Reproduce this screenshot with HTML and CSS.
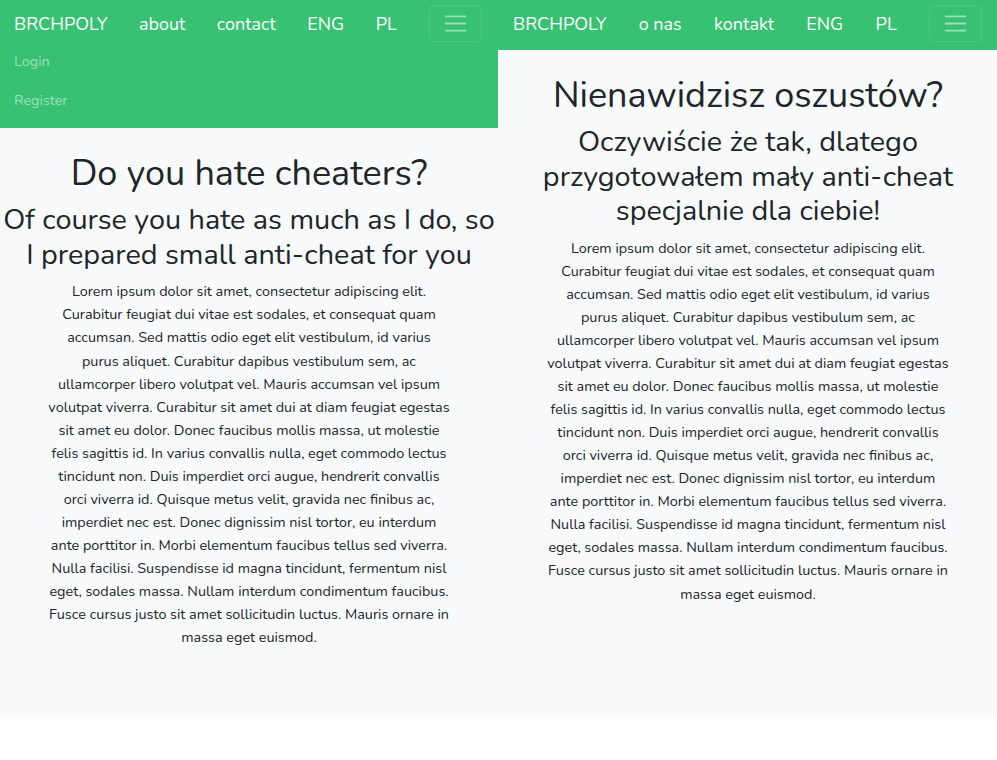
FILE: index.html
```html
<!DOCTYPE html>
<html lang="en">
<head>
<meta charset="utf-8">
<title>BRCHPOLY</title>
<link rel="stylesheet" href="styles.css">
</head>
<body>
<div class="frames">
  <section class="frame frame-left">
    <nav class="navbar">
      <div class="nav-row">
        <a class="brand" href="#">BRCHPOLY</a>
        <a class="nav-link" href="#">about</a>
        <a class="nav-link" href="#">contact</a>
        <a class="nav-link" href="#">ENG</a>
        <a class="nav-link" href="#">PL</a>
        <button class="toggler" type="button" aria-label="Toggle navigation">
          <svg class="toggler-icon" viewBox="0 0 30 30" width="27" height="27"><path d="M4 7h22M4 15h22M4 23h22" stroke="rgba(255,255,255,0.5)" stroke-width="2" stroke-linecap="round" fill="none"/></svg>
        </button>
      </div>
      <div class="collapse">
        <a class="sub-link" href="#">Login</a>
        <a class="sub-link" href="#">Register</a>
      </div>
    </nav>
    <main class="content">
      <h1 class="title">Do you hate cheaters?</h1>
      <h2 class="subtitle">Of course you hate as much as I do, so I prepared small anti-cheat for you</h2>
      <p class="lead-text">Lorem ipsum dolor sit amet, consectetur adipiscing elit. Curabitur feugiat dui vitae est sodales, et consequat quam accumsan. Sed mattis odio eget elit vestibulum, id varius purus aliquet. Curabitur dapibus vestibulum sem, ac ullamcorper libero volutpat vel. Mauris accumsan vel ipsum volutpat viverra. Curabitur sit amet dui at diam feugiat egestas sit amet eu dolor. Donec faucibus mollis massa, ut molestie felis sagittis id. In varius convallis nulla, eget commodo lectus tincidunt non. Duis imperdiet orci augue, hendrerit convallis orci viverra id. Quisque metus velit, gravida nec finibus ac, imperdiet nec est. Donec dignissim nisl tortor, eu interdum ante porttitor in. Morbi elementum faucibus tellus sed viverra. Nulla facilisi. Suspendisse id magna tincidunt, fermentum nisl eget, sodales massa. Nullam interdum condimentum faucibus. Fusce cursus justo sit amet sollicitudin luctus. Mauris ornare in massa eget euismod.</p>
    </main>
  </section>
  <section class="frame frame-right">
    <nav class="navbar">
      <div class="nav-row">
        <a class="brand" href="#">BRCHPOLY</a>
        <a class="nav-link" href="#">o nas</a>
        <a class="nav-link" href="#">kontakt</a>
        <a class="nav-link" href="#">ENG</a>
        <a class="nav-link" href="#">PL</a>
        <button class="toggler" type="button" aria-label="Przełącz nawigację">
          <svg class="toggler-icon" viewBox="0 0 30 30" width="27" height="27"><path d="M4 7h22M4 15h22M4 23h22" stroke="rgba(255,255,255,0.5)" stroke-width="2" stroke-linecap="round" fill="none"/></svg>
        </button>
      </div>
    </nav>
    <main class="content">
      <h1 class="title">Nienawidzisz oszustów?</h1>
      <h2 class="subtitle">Oczywiście że tak, dlatego przygotowałem mały anti-cheat specjalnie dla ciebie!</h2>
      <p class="lead-text">Lorem ipsum dolor sit amet, consectetur adipiscing elit. Curabitur feugiat dui vitae est sodales, et consequat quam accumsan. Sed mattis odio eget elit vestibulum, id varius purus aliquet. Curabitur dapibus vestibulum sem, ac ullamcorper libero volutpat vel. Mauris accumsan vel ipsum volutpat viverra. Curabitur sit amet dui at diam feugiat egestas sit amet eu dolor. Donec faucibus mollis massa, ut molestie felis sagittis id. In varius convallis nulla, eget commodo lectus tincidunt non. Duis imperdiet orci augue, hendrerit convallis orci viverra id. Quisque metus velit, gravida nec finibus ac, imperdiet nec est. Donec dignissim nisl tortor, eu interdum ante porttitor in. Morbi elementum faucibus tellus sed viverra. Nulla facilisi. Suspendisse id magna tincidunt, fermentum nisl eget, sodales massa. Nullam interdum condimentum faucibus. Fusce cursus justo sit amet sollicitudin luctus. Mauris ornare in massa eget euismod.</p>
    </main>
  </section>
</div>
</body>
</html>
```
FILE: styles.css
```css
* { box-sizing: border-box; }

html, body {
  margin: 0;
  padding: 0;
  background: #ffffff;
}

body {
  font-family: Nunito, "Noto Sans", sans-serif;
  font-size: 14.4px;
  line-height: 1.6;
  color: #212529;
}

.frames {
  display: flex;
  height: 717px;
  background: #f8fafc;
}

.frame {
  display: flex;
  flex-direction: column;
}

.frame-left { width: 498px; flex-shrink: 0; }
.frame-right { flex: 1; }

.navbar {
  background: #38c172;
  padding: 5px 16px 8px 14px;
}

.frame-right .navbar { padding-left: 15px; }

.nav-row {
  display: flex;
  align-items: center;
  gap: 31.5px;
  height: 37px;
}

.frame-right .nav-row { gap: 32.3px; }

.brand,
.nav-link {
  flex-shrink: 0;
  white-space: nowrap;
  color: #ffffff;
  text-decoration: none;
  font-size: 18px;
  line-height: 1;
}

.toggler {
  flex-shrink: 0;
  margin-left: auto;
  display: flex;
  align-items: center;
  justify-content: center;
  width: 53px;
  height: 37px;
  padding: 0;
  background: transparent;
  border: 1px solid rgba(255, 255, 255, 0.1);
  border-radius: 4px;
}

.toggler-icon { display: block; }

.collapse {
  display: flex;
  flex-direction: column;
}

.sub-link {
  display: block;
  padding: 8px 0;
  color: rgba(255, 255, 255, 0.5);
  text-decoration: none;
}

.content {
  padding: 24px 0;
  text-align: center;
}

.title {
  margin: 0 0 8px;
  font-size: 36px;
  font-weight: 400;
  line-height: 1.2;
}

.subtitle {
  margin: 0 0 8px;
  font-size: 28.8px;
  font-weight: 400;
  line-height: 1.2;
}

.lead-text {
  margin: 0 auto 16px;
  max-width: 403px;
}
```
